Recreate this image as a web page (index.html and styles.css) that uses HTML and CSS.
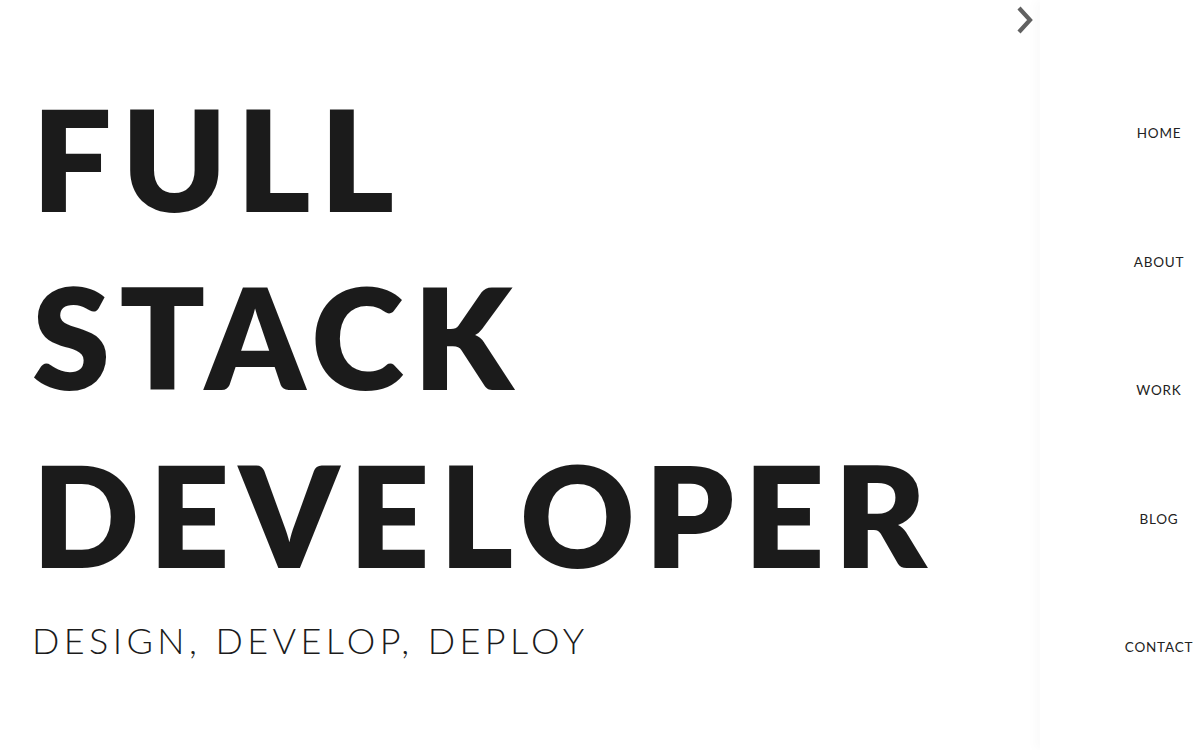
FILE: index.html
```html
<!DOCTYPE html>
<html lang="en">
<head>
<meta charset="utf-8">
<title>Full Stack Developer</title>
<link rel="stylesheet" href="styles.css">
</head>
<body>
<main class="hero">
  <div class="toggle-row">
    <button class="toggle" aria-label="Toggle menu">
      <svg class="chevron" viewBox="0 0 20 28" width="20" height="28" aria-hidden="true">
        <polyline points="3,2 14,14 3,26" fill="none" stroke="#616161" stroke-width="4.2" stroke-linejoin="miter"/>
      </svg>
    </button>
  </div>
  <h1 class="title">FULL<br>STACK<br>DEVELOPER</h1>
  <p class="subtitle">DESIGN, DEVELOP, DEPLOY</p>
</main>
<aside class="sidebar">
  <nav>
    <ul class="nav-list">
      <li class="nav-item"><a href="#" class="nav-link">HOME</a></li>
      <li class="nav-item"><a href="#" class="nav-link">ABOUT</a></li>
      <li class="nav-item"><a href="#" class="nav-link">WORK</a></li>
      <li class="nav-item"><a href="#" class="nav-link">BLOG</a></li>
      <li class="nav-item"><a href="#" class="nav-link">CONTACT</a></li>
    </ul>
  </nav>
</aside>
</body>
</html>
```
FILE: styles.css
```css
html, body {
  margin: 0;
  padding: 0;
  height: 100%;
}
body {
  display: flex;
  overflow: hidden;
  background: #ffffff;
  font-family: Lato, "Noto Sans", sans-serif;
  color: #1b1b1b;
}
.hero {
  flex: 1;
  display: flex;
  flex-direction: column;
  padding-left: 32px;
}
.toggle-row {
  display: flex;
  justify-content: flex-end;
  padding-top: 6px;
  padding-right: 4px;
}
.toggle {
  background: none;
  border: 0;
  padding: 0;
  margin: 0;
  line-height: 0;
  cursor: pointer;
}
.chevron {
  display: block;
}
.title {
  margin: 35px 0 0;
  font-size: 141px;
  font-weight: 800;
  line-height: 178px;
  letter-spacing: 9.5px;
  color: #1b1b1b;
}
.subtitle {
  margin: 16px 0 0;
  font-size: 36px;
  font-weight: 300;
  line-height: 1.2;
  letter-spacing: 4.4px;
  color: #1b1b1b;
}
.sidebar {
  width: 160px;
  flex-shrink: 0;
  background: #ffffff;
  box-shadow: -5px 0 10px rgba(0, 0, 0, 0.025);
}
.nav-list {
  list-style: none;
  margin: 0;
  padding: 69px 0 0 78px;
}
.nav-item {
  height: 128.5px;
  display: flex;
  align-items: center;
  justify-content: center;
}
.nav-link {
  font-size: 13.5px;
  letter-spacing: 0.8px;
  color: #222222;
  text-decoration: none;
}
```
